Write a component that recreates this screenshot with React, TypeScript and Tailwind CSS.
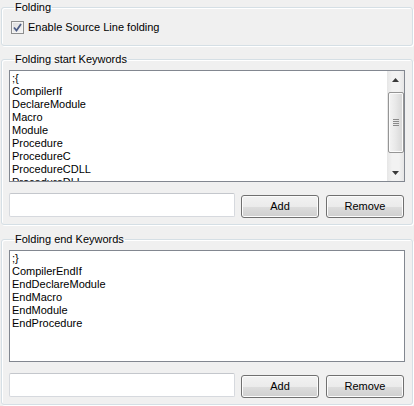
import React from "react";

const font = { fontFamily: '"Liberation Sans", Arial, sans-serif' };

function Group({ title, children, className = "" }: { title: string; children: React.ReactNode; className?: string }) {
  return (
    <fieldset className={`ml-[1px] w-[412px] border border-[#d5dfe5] rounded-[3px] shadow-[inset_1px_1px_0_#ffffff,1px_1px_0_#ffffff] px-[7px] ${className}`}>
      <legend className="ml-[5px] px-[1px] leading-[13px] text-[11px] text-black">{title}</legend>
      {children}
    </fieldset>
  );
}

function Button({ label }: { label: string }) {
  return (
    <button className="w-[78px] h-[23px] mt-[1px] rounded-[3px] border border-[#707070] bg-[linear-gradient(#f2f2f2_0%,#ebebeb_50%,#dddddd_50%,#cfcfcf_100%)] shadow-[inset_0_0_0_1px_#fcfcfc] text-[11px] font-normal text-black leading-[13px]">
      {label}
    </button>
  );
}

function Row() {
  return (
    <div className="flex items-start">
      <div className="w-[226px] h-[24px] bg-white border border-[#d6d9de] border-t-[#c4c7cc] rounded-[2px]" />
      <div className="ml-[6px]"><Button label="Add" /></div>
      <div className="ml-[7px]"><Button label="Remove" /></div>
    </div>
  );
}

function ScrollBar() {
  return (
    <div className="w-[17px] h-full bg-[linear-gradient(90deg,#e6e6e6,#f2f2f2_30%,#f2f2f2_70%,#e6e6e6)] flex flex-col items-center">
      <div className="h-[17px] w-full flex items-center justify-center">
        <svg width="7" height="4" viewBox="0 0 7 4"><path d="M3.5 0 L7 4 L0 4 Z" fill="#3a3a3a" /></svg>
      </div>
      <div className="mt-[4px] w-[16px] h-[61px] rounded-[2px] border border-[#959595] bg-[linear-gradient(90deg,#f4f4f4,#e9e9e9_45%,#d6d6d6)] shadow-[inset_0_0_0_1px_#fbfbfb] flex flex-col items-center justify-center gap-[1px]">
        <div className="w-[6px] h-[1px] bg-[#8a8a8a]" />
        <div className="w-[6px] h-[1px] bg-[#8a8a8a]" />
        <div className="w-[6px] h-[1px] bg-[#8a8a8a]" />
        <div className="w-[6px] h-[1px] bg-[#8a8a8a]" />
      </div>
      <div className="flex-1" />
      <div className="h-[17px] w-full flex items-center justify-center">
        <svg width="7" height="4" viewBox="0 0 7 4"><path d="M0 0 L7 0 L3.5 4 Z" fill="#3a3a3a" /></svg>
      </div>
    </div>
  );
}

function ListBox({ items, scroll }: { items: string[]; scroll?: boolean }) {
  return (
    <div className="w-[396px] h-[112px] border border-[#828790] bg-white flex overflow-hidden">
      <div className="flex-1 overflow-hidden pl-[2px] pt-[1px]">
        {items.map((it) => (
          <div key={it} className="h-[13px] leading-[13px] text-[11px] text-black whitespace-nowrap">{it}</div>
        ))}
      </div>
      {scroll && <ScrollBar />}
    </div>
  );
}

export default function App() {
  return (
    <div className="w-[414px] h-[406px] bg-[#f0f0f0] overflow-hidden pt-[1px]" style={font}>
      <Group title="Folding" className="pt-[7px] pb-[11px]">
        <label className="flex items-center h-[13px] ml-[2px]">
          <span className="w-[13px] h-[13px] border border-[#8e8f8f] bg-[linear-gradient(135deg,#dcdcdc,#f6f6f6)] flex items-center justify-center shadow-[inset_0_0_0_1px_#f4f4f4]">
            <svg width="9" height="9" viewBox="0 0 9 9">
              <path d="M1 4.5 L3.5 7.5 L8 1" fill="none" stroke="#4d5d86" strokeWidth="1.8" />
            </svg>
          </span>
          <span className="ml-[4px] text-[11px] leading-[13px] text-black">Enable Source Line folding</span>
        </label>
      </Group>
      <Group title="Folding start Keywords" className="mt-[7px] pt-[4px] pb-[6px]">
        <ListBox
          scroll
          items={[";{", "CompilerIf", "DeclareModule", "Macro", "Module", "Procedure", "ProcedureC", "ProcedureCDLL", "ProcedureDLL"]}
        />
        <div className="mt-[11px]">
          <Row />
        </div>
      </Group>
      <Group title="Folding end Keywords" className="mt-[8px] pt-[4px] pb-[6px]">
        <ListBox items={[";}", "CompilerEndIf", "EndDeclareModule", "EndMacro", "EndModule", "EndProcedure"]} />
        <div className="mt-[11px]">
          <Row />
        </div>
      </Group>
    </div>
  );
}
